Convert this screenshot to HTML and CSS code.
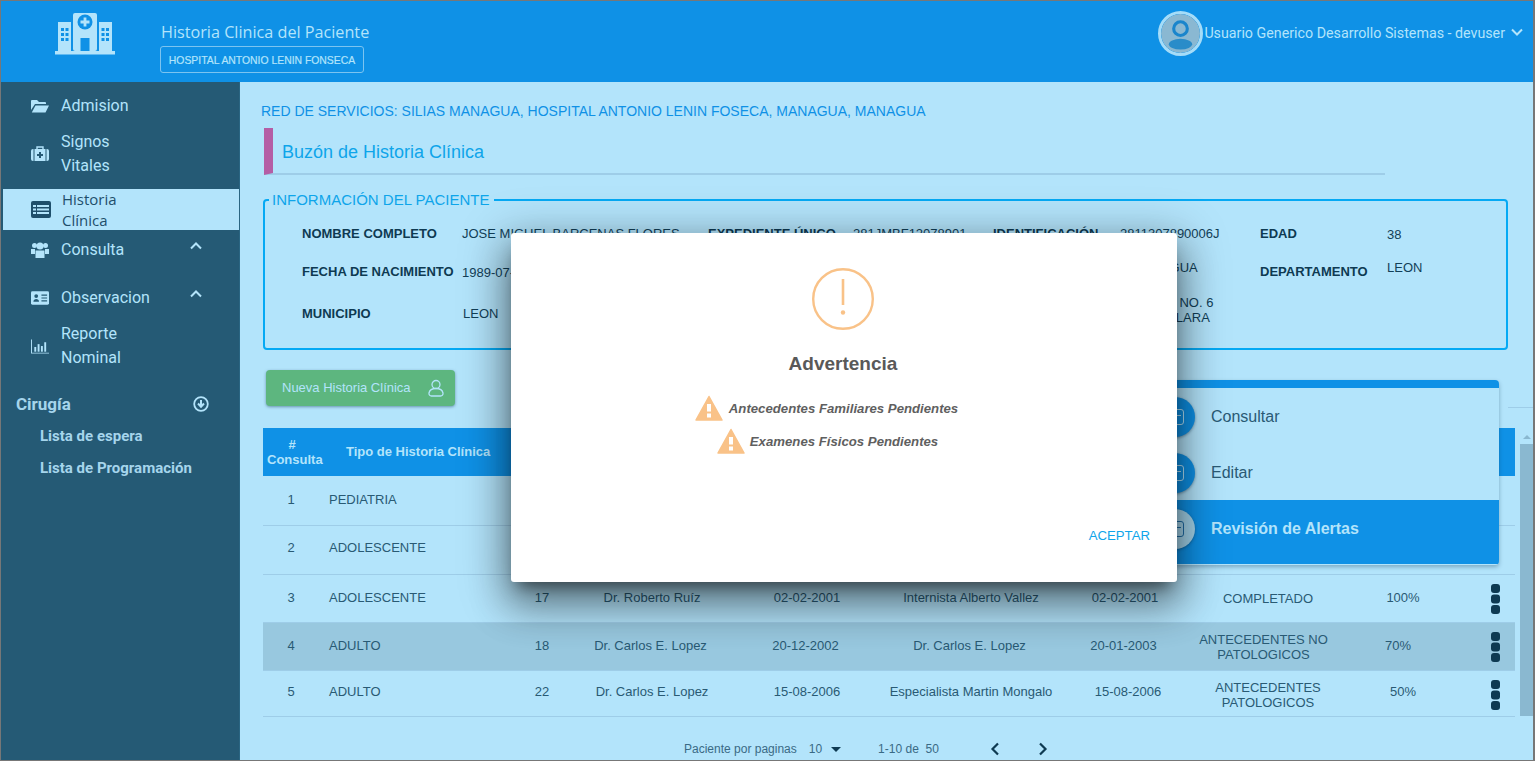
FILE: index.html
```html
<!DOCTYPE html>
<html lang="es">
<head>
<meta charset="utf-8">
<title>Historia Clínica del Paciente</title>
<link rel="stylesheet" href="styles.css">
</head>
<body>
<div class="app">
  <header class="topbar">
    <div class="brand-logo">
      <svg viewBox="0 0 60 42" width="60" height="42" fill="#b3e4fb">
        <rect x="3" y="9" width="13" height="29"/><rect x="44" y="9" width="13" height="29"/>
        <rect x="18" y="0" width="24" height="38" rx="2"/>
        <rect x="0" y="38" width="60" height="3.5"/>
        <circle cx="30" cy="9" r="7.5" fill="#0f91e6"/>
        <path d="M28.6 4.5h2.8v3.1h3.1v2.8h-3.1v3.1h-2.8v-3.1h-3.1V7.6h3.1z"/>
        <rect x="25.500" y="25" width="9" height="13" fill="#0f91e6"/>
        <g fill="#0f91e6">
          <rect x="6" y="15" width="3" height="3"/><rect x="10.500" y="15" width="3" height="3"/><rect x="6" y="20" width="3" height="3"/><rect x="10.500" y="20" width="3" height="3"/><rect x="6" y="25" width="3" height="3"/><rect x="10.500" y="25" width="3" height="3"/>
          <rect x="46.500" y="15" width="3" height="3"/><rect x="51" y="15" width="3" height="3"/><rect x="46.500" y="20" width="3" height="3"/><rect x="51" y="20" width="3" height="3"/><rect x="46.500" y="25" width="3" height="3"/><rect x="51" y="25" width="3" height="3"/>
        </g>
      </svg>
    </div>
    <div class="brand-text">
      <div class="brand-title">Historia Clinica del Paciente</div>
      <div class="brand-badge">HOSPITAL ANTONIO LENIN FONSECA</div>
    </div>
    <div class="user">
      <span class="avatar">
        <svg viewBox="0 0 40 40" width="38" height="38"><circle cx="20" cy="20" r="20" fill="#8ab8d2"/><circle cx="20" cy="15" r="7" fill="none" stroke="#1a85cc" stroke-width="3.200"/><ellipse cx="20" cy="31" rx="12" ry="5.500" fill="#2a8cc9"/></svg>
      </span>
      <span class="user-name">Usuario Generico Desarrollo Sistemas - devuser</span>
      <svg class="user-caret" viewBox="0 0 12 8" width="12" height="8"><path d="M1 1.500l5 5 5-5" fill="none" stroke="#b3e4fb" stroke-width="2"/></svg>
    </div>
  </header>
  <div class="body-row">
    <nav class="sidebar">
      <a class="nav-item h-admision">
        <svg class="nav-ico" viewBox="0 0 18 14" width="18" height="14" fill="#b3e4fb"><path d="M0 2a1 1 0 0 1 1-1h5l2 2h6a1 1 0 0 1 1 1v1H4L0 11z"/><path d="M4.500 6.500H18l-3.500 7H0.800z"/></svg>
        <span>Admision</span>
      </a>
      <a class="nav-item h-signos">
        <svg class="nav-ico" viewBox="0 0 18 15" width="17" height="15"><path d="M6 3V1h6v2" fill="none" stroke="#b3e4fb" stroke-width="1.400"/><rect x="0" y="3" width="18" height="12" rx="2" fill="#b3e4fb"/><path d="M3 3v12M15 3v12" stroke="#255a75" stroke-width="1"/><path d="M8 6h2v2h2v2h-2v2H8v-2H6V8h2z" fill="#255a75"/></svg>
        <span>Signos<br>Vitales</span>
      </a>
      <a class="nav-item active">
        <svg class="nav-ico" viewBox="0 0 20 17" width="20" height="17"><rect width="20" height="17" rx="2" fill="#1f4f6b"/><g fill="#b3e4fb"><rect x="2" y="4" width="3" height="2"/><rect x="6" y="4" width="12" height="2"/><rect x="2" y="7.500" width="3" height="2"/><rect x="6" y="7.500" width="12" height="2"/><rect x="2" y="11" width="3" height="2"/><rect x="6" y="11" width="12" height="2"/></g></svg>
        <span>Historia<br>Clínica</span>
      </a>
      <a class="nav-item h-consulta">
        <svg class="nav-ico" viewBox="0 0 18 16" width="18" height="16" fill="#b3e4fb"><circle cx="3.500" cy="3.500" r="2.500"/><circle cx="14.500" cy="3.500" r="2.500"/><circle cx="9" cy="4" r="3.500"/><path d="M0 7h4v5H0zM14 7h4v5h-4z"/><path d="M4.500 8.500h9V16h-9z"/></svg>
        <span>Consulta</span>
        <svg class="nav-chev" viewBox="0 0 12 8" width="12" height="8"><path d="M1 6.500l5-5 5 5" fill="none" stroke="#b3e4fb" stroke-width="2"/></svg>
      </a>
      <a class="nav-item h-observ">
        <svg class="nav-ico" viewBox="0 0 19 14" width="19" height="14"><rect width="19" height="14" rx="1.500" fill="#b3e4fb"/><circle cx="5.500" cy="5" r="2" fill="#255a75"/><path d="M2.500 11c0-4 6-4 6 0z" fill="#255a75"/><path d="M11 4h6M11 7h6M11 10h6" stroke="#255a75" stroke-width="1.200"/></svg>
        <span>Observacion</span>
        <svg class="nav-chev" viewBox="0 0 12 8" width="12" height="8"><path d="M1 6.500l5-5 5 5" fill="none" stroke="#b3e4fb" stroke-width="2"/></svg>
      </a>
      <a class="nav-item h-reporte">
        <svg class="nav-ico" viewBox="0 0 19 15" width="19" height="15" fill="#b3e4fb"><path d="M0 0h1v14h18v1H0z"/><rect x="3.500" y="8" width="2" height="5"/><rect x="7" y="5" width="2" height="8"/><rect x="10.500" y="7" width="2" height="6"/><rect x="14" y="3" width="2" height="10"/></svg>
        <span>Reporte<br>Nominal</span>
      </a>
      <div class="nav-group">
        <span>Cirugía</span>
        <svg viewBox="0 0 16 16" width="16" height="16"><circle cx="8" cy="8" r="6.800" fill="none" stroke="#b3e4fb" stroke-width="1.800"/><path d="M8 4v6M5 7.500l3 3.200 3-3.200" fill="none" stroke="#b3e4fb" stroke-width="2"/></svg>
      </div>
      <a class="nav-sub">Lista de espera</a>
      <a class="nav-sub">Lista de Programación</a>
    </nav>
    <main class="content">
      <p class="red">RED DE SERVICIOS: SILIAS MANAGUA, HOSPITAL ANTONIO LENIN FOSECA, MANAGUA, MANAGUA</p>
      <h1 class="page-title">Buzón de Historia Clínica</h1>
      <fieldset class="info">
        <legend>INFORMACIÓN DEL PACIENTE</legend>
        <div class="info-grid">
          <b>NOMBRE COMPLETO</b><span>JOSE MIGUEL BARCENAS FLORES</span><b>EXPEDIENTE ÚNICO</b><span>281JMBF12078901</span><b>IDENTIFICACIÓN</b><span>2811307890006J</span><b>EDAD</b><span class="low">38</span>
          <b>FECHA DE NACIMIENTO</b><span class="low">1989-07-12</span><b>SEXO</b><span>MASCULINO</span><b>RESIDENCIA</b><span class="raise in">MANAGUA</span><b>DEPARTAMENTO</b><span class="raise">LEON</span>
          <b>MUNICIPIO</b><span class="nudge">LEON</span><b>DIRECCIÓN</b><span>&nbsp;</span><b>&nbsp;</b><span class="up">BARRIO NO. 6<br>DE LA CLARA</span><b>&nbsp;</b><span>&nbsp;</span>
        </div>
      </fieldset>
      <button class="btn-new">
        <span>Nueva Historia Clínica</span>
        <svg viewBox="0 0 16 18" width="16" height="18" fill="none" stroke="#b3e4fb" stroke-width="1.300"><circle cx="8" cy="5.500" r="4"/><path d="M3.500 17h9a2.500 2.500 0 0 0 2.500-3c-.6-3-3.500-4.500-7-4.500S1.600 11 1 14a2.500 2.500 0 0 0 2.500 3z"/></svg>
      </button>
      <div class="table-wrap">
        <table class="grid">
          <colgroup><col class="c1"><col class="c2"><col class="c3"><col class="c4"><col class="c5"><col class="c6"><col class="c7"><col class="c8"><col class="c9"><col class="c10"></colgroup>
          <thead>
            <tr><th class="num-h"># Consulta</th><th class="left-h">Tipo de Historia Clínica</th><th></th><th></th><th></th><th></th><th></th><th></th><th></th><th></th></tr>
          </thead>
          <tbody>
            <tr class="r1"><td>1</td><td class="left">PEDIATRIA</td><td></td><td></td><td></td><td></td><td></td><td></td><td></td><td></td></tr>
            <tr class="r2"><td>2</td><td class="left">ADOLESCENTE</td><td></td><td></td><td></td><td></td><td></td><td></td><td></td><td></td></tr>
            <tr class="r3"><td>3</td><td class="left">ADOLESCENTE</td><td>17</td><td>Dr. Roberto Ruíz</td><td>02-02-2001</td><td>Internista Alberto Vallez</td><td>02-02-2001</td><td class="st">COMPLETADO</td><td>100%</td><td class="act"><i class="dots"></i></td></tr>
            <tr class="r4"><td>4</td><td class="left">ADULTO</td><td>18</td><td class="shift">Dr. Carlos E. Lopez</td><td class="shift">20-12-2002</td><td class="shift">Dr. Carlos E. Lopez</td><td class="shift">20-01-2003</td><td class="st state-shift">ANTECEDENTES NO PATOLOGICOS</td><td class="pct-shift">70%</td><td class="act"><i class="dots"></i></td></tr>
            <tr class="r5"><td>5</td><td class="left">ADULTO</td><td>22</td><td>Dr. Carlos E. Lopez</td><td>15-08-2006</td><td>Especialista Martin Mongalo</td><td class="date-shift">15-08-2006</td><td class="st">ANTECEDENTES PATOLOGICOS</td><td>50%</td><td class="act"><i class="dots"></i></td></tr>
          </tbody>
        </table>
        <div class="scrollbar"><span class="sb-up"></span></div>
      </div>
      <div class="pager">
        <span>Paciente por paginas</span>
        <span class="pg-size">10</span>
        <i class="pg-caret"></i>
        <span class="pg-range">1-10 de&nbsp; 50</span>
        <svg class="pg-prev" viewBox="0 0 10 14" width="10" height="14"><path d="M8 1.500L2.500 7 8 12.500" fill="none" stroke="#0e3a52" stroke-width="2.200"/></svg>
        <svg class="pg-next" viewBox="0 0 10 14" width="10" height="14"><path d="M2 1.500L7.500 7 2 12.500" fill="none" stroke="#0e3a52" stroke-width="2.200"/></svg>
      </div>
    </main>
  </div>

  <div class="menu">
    <div class="menu-item"><span class="menu-ico"><i></i></span><span>Consultar</span></div>
    <div class="menu-item"><span class="menu-ico"><i></i></span><span>Editar</span></div>
    <div class="menu-item sel"><span class="menu-ico"><i></i></span><span>Revisión de Alertas</span></div>
  </div>

  <div class="modal">
    <svg class="modal-ico" viewBox="0 0 62 62" width="62" height="62"><circle cx="31" cy="31" r="29.800" fill="none" stroke="#f9c288" stroke-width="2.400"/><path d="M31 11v26" stroke="#f9c288" stroke-width="2.600"/><circle cx="31" cy="44.500" r="2.200" fill="#f9c288"/></svg>
    <h2>Advertencia</h2>
    <div class="alert"><svg viewBox="0 0 28 26" width="28" height="26"><path d="M14 1.500L27 25H1z" fill="#f9c288" stroke="#f9c288" stroke-width="1.500" stroke-linejoin="round"/><rect x="12" y="9" width="4" height="7.500" fill="#fff"/><rect x="12" y="18.500" width="4" height="4" fill="#fff"/></svg><span>Antecedentes Familiares Pendientes</span></div>
    <div class="alert second"><svg viewBox="0 0 28 26" width="28" height="26"><path d="M14 1.500L27 25H1z" fill="#f9c288" stroke="#f9c288" stroke-width="1.500" stroke-linejoin="round"/><rect x="12" y="9" width="4" height="7.500" fill="#fff"/><rect x="12" y="18.500" width="4" height="4" fill="#fff"/></svg><span>Examenes Físicos Pendientes</span></div>
    <div class="modal-actions"><a>ACEPTAR</a></div>
  </div>
</div>
</body>
</html>
```
FILE: styles.css
```css
* { box-sizing: border-box; }
html, body { margin: 0; height: 100%; overflow: hidden; }
body { font-family: "Liberation Sans", Arial, sans-serif; color: #1f4f6b; }
.app { position: relative; width: 1535px; height: 761px; border: 1px solid #777; border-right-width: 2px; display: flex; flex-direction: column; overflow: hidden; background: #b3e4fb; }

.topbar { height: 81px; background: #0f91e6; display: flex; align-items: flex-start; flex: none; }
.brand-logo { width: 159px; padding: 12px 0 0 54px; }
.brand-logo svg { display: block; }
.brand-text { padding-top: 20px; }
.brand-title { font-family: "Open Sans", sans-serif; font-size: 16.200px; line-height: 22px; color: #b3e4fb; margin-left: 1px; }
.brand-badge { margin-top: 3px; width: 204px; height: 27px; border: 1px solid #7cc4f0; border-radius: 3px; font-size: 10.400px; color: #b3e4fb; line-height: 27px; text-align: center; -webkit-text-stroke: .2px #b3e4fb; }
.user { margin-left: auto; display: flex; align-items: center; height: 44px; margin-top: 10px; padding-right: 10px; }
.avatar { width: 45px; height: 45px; border-radius: 50%; border: 3px solid #a5dcf8; display: block; overflow: hidden; }
.avatar svg { display: block; width: 39px; height: 39px; }
.user-name { font-family: Roboto, sans-serif; font-size: 14.250px; color: #b3e4fb; margin: -1px 6px 0 1px; }
.user-caret { margin-top: -3px; }

.body-row { flex: 1; display: flex; min-height: 0; }
.sidebar { width: 239px; flex: none; background: #255a75; padding-top: 5px; font-family: Roboto, sans-serif; color: #b3e4fb; border-right: 1px solid #2a6582; }
.nav-item { display: flex; align-items: center; position: relative; padding-left: 30px; font-size: 16px; line-height: 24px; color: #b3e4fb; }
.nav-ico { flex: none; margin-right: 12px; }
.nav-item > svg.nav-ico { width: 18px; }
.h-admision { height: 37px; }
.h-signos { height: 56px; padding-top: 3px; }
.active { height: 41px; margin: 9px 0 0 2px; padding-left: 28px; background: #b3e4fb; color: #1f4f6b; font-family: "Open Sans", sans-serif; font-size: 15px; line-height: 21px; }
.active svg.nav-ico { width: 20px; margin-right: 11px; }
.h-consulta { height: 39px; margin-bottom: 9px; }
.h-observ { height: 39px; }
.h-reporte { height: 56px; padding-top: 2px; }
.nav-chev { position: absolute; right: 37px; top: 12px; }
.nav-group { display: flex; justify-content: space-between; align-items: center; padding: 0 30px 0 15px; margin-top: 19px; height: 24px; font-size: 17px; font-weight: 700; color: #a5d5ec; }
.nav-sub { display: block; padding-left: 39px; font-size: 15px; font-weight: 700; color: #a5d5ec; line-height: 20px; margin-top: 12px; }
.nav-group + .nav-sub { margin-top: 10px; }

.content { flex: 1; min-width: 0; padding: 0 0 0 21px; position: relative; }
.content::after { content: ""; position: absolute; right: 0; top: 325px; width: 25px; height: 1px; background: #9ecde8; }
.red { margin: 21px 0 0; font-size: 14px; line-height: 16px; color: #0f91e6; }
.page-title { margin: 9px 0 0 3px; width: 1121px; height: 47px; border-left: 9px solid #b45ea5; border-bottom: 2px solid #9ecde8; padding-left: 9px; font-size: 18px; font-weight: 400; line-height: 49px; color: #0ea5ea; }
.info { margin: 16px 0 0 2px; width: 1245px; height: 159px; padding: 0 0 0 37px; border: 2px solid #05a9f4; border-radius: 4px; }
.info legend { margin-left: -33px; padding: 0 4px 0 3px; font-size: 15px; line-height: 18px; color: #0ea5ea; font-weight: 400; }
.info-grid { display: grid; grid-template-columns: 160px 246px 145px 140px 127px 140px 127px 100px; grid-template-rows: 38px 42px 42px; margin-top: 17px; font-size: 13px; line-height: 15px; color: #123f58; }
.info-grid b { font-size: 13px; color: #0e3a52; font-family: "Liberation Sans", sans-serif; }
.info-grid span { white-space: nowrap; }
.info-grid .low { margin-top: 1px; }
.info-grid .raise { margin-top: -4px; }
.info-grid .in { padding-left: 12px; }
.info-grid .up { margin-top: -11px; padding-left: 6px; }
.info-grid .nudge { padding-left: 1px; }

.btn-new { display: flex; align-items: center; justify-content: space-between; margin: 20px 0 0 5px; width: 189px; height: 36px; padding: 0 11px 0 16px; border: 0; border-radius: 4px; background: #5db67f; color: #b3e4fb; font: 13px "Liberation Sans", sans-serif; box-shadow: 0 1px 3px rgba(30, 70, 100, .5); }
.btn-new span { margin-bottom: 2px; }

.table-wrap { margin: 22px 0 0 2px; position: relative; width: 1271px; height: 288px; }
.grid { border-collapse: collapse; table-layout: fixed; width: 1252px; font-size: 13px; line-height: 15px; }
.c1 { width: 56px; } .c2 { width: 196px; } .c3 { width: 54px; } .c4 { width: 166px; } .c5 { width: 144px; } .c6 { width: 184px; } .c7 { width: 124px; } .c8 { width: 162px; } .c9 { width: 108px; } .c10 { width: 58px; }
.grid th { height: 48px; background: #0f91e6; color: #b3e4fb; font-size: 13px; line-height: 15px; padding: 0 4px; font-weight: 700; text-align: center; }
.grid th.num-h { padding: 0 2px 0 4px; }
.grid th.left-h { text-align: left; padding: 0 4px 2px 27px; white-space: nowrap; }
.grid td { padding: 0 6px 2px; text-align: center; border-bottom: 1px solid #9ecde8; color: #295a74; }
.grid td.left { text-align: left; padding-left: 10px; }
.grid .r2 td, .grid .r5 td { padding-bottom: 4px; }
.grid td.shift { padding-right: 9px; }
.grid td.date-shift { padding-left: 12px; }
.grid td.pct-shift { padding-right: 16px; }
.grid .r3 td.st { padding-bottom: 0; }
.grid .r4 td.st { padding: 2px 6px 0; }
.grid .r5 td.st { padding: 4px 6px 0; }
.grid .r4 td.state-shift { padding-right: 15px; }
.grid tr td.act { padding: 2px 6px 0; }
.grid .r5 td.act { padding-top: 4px; }
.r1 td { height: 49px; } .r2 td { height: 49px; } .r3 td { height: 48px; } .r4 td { height: 48px; background: #98c8df; } .r5 td { height: 46px; }
.dots { display: block; width: 9px; height: 9px; margin: 0 9px 21px auto; border-radius: 3px; background: #0e3a52; box-shadow: 0 10.500px 0 #0e3a52, 0 21px 0 #0e3a52; }
.scrollbar { position: absolute; right: 0; top: 2px; width: 14px; height: 286px; background: #8ab8d0; }
.sb-up { position: absolute; top: 0; left: 0; right: 0; height: 14px; background: #b3e4fb; }
.sb-up::after { content: ""; position: absolute; left: 3px; top: 5px; border: 4px solid transparent; border-top: 0; border-bottom-color: #8ab8d0; }

.pager { margin: 26px 0 0 423px; display: flex; align-items: center; height: 14px; font-size: 12px; color: #3a6a85; }
.pg-size { margin-left: 12px; }
.pg-caret { margin-left: 9px; border: 5px solid transparent; border-bottom: 0; border-top-color: #0e3a52; }
.pg-range { margin-left: 37px; }
.pg-prev { margin-left: 51px; }
.pg-next { margin-left: 38px; }

.menu { position: absolute; left: 1100px; top: 379px; width: 398px; height: 185px; padding-top: 8px; background: #b3e4fb; border-radius: 4px; box-shadow: 0 2px 4px rgba(20, 60, 90, .35); overflow: hidden; }
.menu::before { content: ""; position: absolute; left: 0; right: 0; top: 0; height: 8px; background: #0f91e6; }
.menu-item { display: flex; align-items: center; height: 56px; padding: 1px 0 0 54px; gap: 16px; font-size: 16px; color: #2a5a75; }
.menu-item.sel { height: 64px; padding-bottom: 8px; background: #0f91e6; color: #b3e4fb; font-weight: 700; }
.menu-ico { width: 40px; height: 40px; border-radius: 50%; background: #0f91e6; flex: none; display: flex; align-items: center; justify-content: center; box-shadow: 0 1px 3px rgba(20, 60, 90, .5); }
.sel .menu-ico { background: #a5d5ec; }
.menu-ico i { display: block; width: 18px; height: 16px; border: 1.500px solid #b3e4fb; border-radius: 3px; position: relative; }
.menu-ico i::after { content: ""; position: absolute; left: 2px; right: 2px; top: 5px; height: 1.500px; background: #b3e4fb; }
.sel .menu-ico i { border-color: #1f6fa8; }
.sel .menu-ico i::after { background: #1f6fa8; }

.modal { position: absolute; left: 510px; top: 232px; width: 666px; height: 349px; background: #fff; border-radius: 3px; box-shadow: 0 11px 15px -7px rgba(0, 0, 0, .5), 0 24px 38px 3px rgba(0, 0, 0, .3), 0 9px 46px 8px rgba(0, 0, 0, .25); padding-top: 35px; display: flex; flex-direction: column; align-items: center; }
.modal-ico { display: block; flex: none; margin-right: 2px; }
.modal h2 { margin: 23px 2px 0 0; font-size: 19px; line-height: 22px; font-weight: 700; color: #595959; }
.alert { display: flex; align-items: center; margin: 20px 35px 0 0; height: 26px; gap: 6px; font-size: 13.200px; font-weight: 700; font-style: italic; color: #5f5f5f; }
.alert.second { margin: 7px 33px 0 0; gap: 5px; }
.modal-actions { position: absolute; right: 27px; bottom: 39px; font-size: 13.200px; color: #0ea5ea; }
```
